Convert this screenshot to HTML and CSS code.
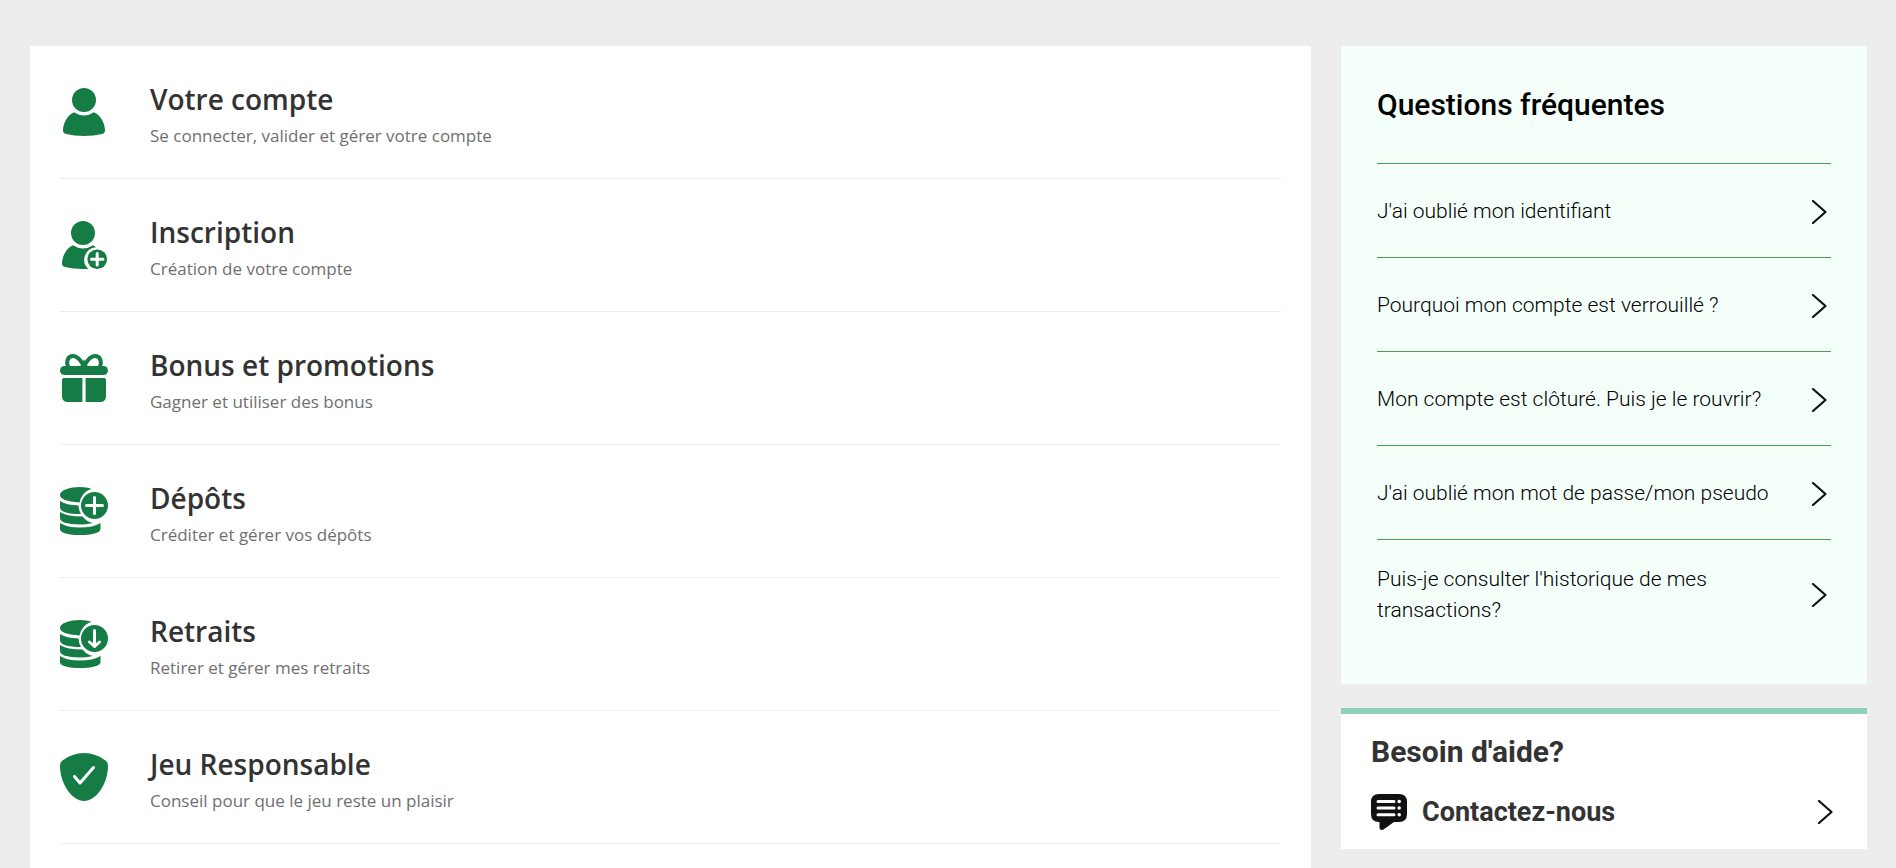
FILE: index.html
```html
<!DOCTYPE html>
<html lang="fr">
<head>
    <meta charset="UTF-8">
    <meta name="viewport" content="width=device-width, initial-scale=1.0">
    <title>Aide</title>
    <link rel="stylesheet" href="styles.css">
</head>
<body>
    <div class="page">
        <main class="topics">
            <a class="topic" href="#compte">
                <svg class="topic-icon" viewBox="0 0 48 48" aria-hidden="true">
                    <circle cx="24" cy="12" r="12"/>
                    <path d="M14 24.200Q24 30.800 34 24.200C40 26.500 45 35 45 42.500Q45 45 42 46Q34 48 24 48T6 46Q3 45 3 42.500C3 35 8 26.500 14 24.200Z"/>
                </svg>
                <div>
                    <h2>Votre compte</h2>
                    <p>Se connecter, valider et gérer votre compte</p>
                </div>
            </a>
            <a class="topic" href="#inscription">
                <svg class="topic-icon" viewBox="0 0 48 48" aria-hidden="true">
                    <circle cx="23" cy="12" r="12"/>
                    <path d="M13 24.200Q23 30.800 33 24.200Q35 25 36 26.200A12.500 12.500 0 0 0 28.500 48H23Q13 48 5 46Q2 45 2 42.500C2 35 7 26.500 13 24.200Z"/>
                    <circle cx="37.200" cy="38.200" r="9.800"/>
                    <path class="line" d="M37.200 32.500v11.400M31.500 38.200h11.400"/>
                </svg>
                <div>
                    <h2>Inscription</h2>
                    <p>Création de votre compte</p>
                </div>
            </a>
            <a class="topic" href="#bonus">
                <svg class="topic-icon" viewBox="0 0 48 48" aria-hidden="true">
                    <path class="ribbon" d="M9 14C5 8 8 2 13 2C19 2 22 9 24 12C26 9 29 2 35 2C40 2 43 8 39 14M20 14Q23 13 24 10.500Q25 13 28 14"/>
                    <rect x="0" y="12" width="48" height="9" rx="4.500"/>
                    <path d="M4 24H22.400V48H8Q2 48 2 42V26Q2 24 4 24ZM25.600 24H44Q46 24 46 26V42Q46 48 40 48H25.600Z"/>
                </svg>
                <div>
                    <h2>Bonus et promotions</h2>
                    <p>Gagner et utiliser des bonus</p>
                </div>
            </a>
            <a class="topic" href="#depots">
                <svg class="topic-icon" viewBox="0 0 48 48" aria-hidden="true">
                    <path d="M0 8C0 3 10 0 20 0Q27 0 31.500 1.800Q22 5 19.500 15.500Q0 14 0 8Z"/>
                    <path d="M0 14Q6 18 18.600 18.500Q18.600 23 21 27Q0 27 0 20Z"/>
                    <path d="M0 25Q7 29.500 22.500 29.500Q27 35 33 36Q26 37.500 20 37.500Q0 37 0 31Z"/>
                    <path d="M0 36Q7 40.500 20 40.500T40.500 36V42C40.500 46 31 48 20 48S0 46 0 42Z"/>
                    <circle cx="34.500" cy="18.500" r="13.500"/>
                    <path class="line" d="M34.500 10.500v16M26.500 18.500h16"/>
                </svg>
                <div>
                    <h2>Dépôts</h2>
                    <p>Créditer et gérer vos dépôts</p>
                </div>
            </a>
            <a class="topic" href="#retraits">
                <svg class="topic-icon" viewBox="0 0 48 48" aria-hidden="true">
                    <path d="M0 8C0 3 10 0 20 0Q27 0 31.500 1.800Q22 5 19.500 15.500Q0 14 0 8Z"/>
                    <path d="M0 14Q6 18 18.600 18.500Q18.600 23 21 27Q0 27 0 20Z"/>
                    <path d="M0 25Q7 29.500 22.500 29.500Q27 35 33 36Q26 37.500 20 37.500Q0 37 0 31Z"/>
                    <path d="M0 36Q7 40.500 20 40.500T40.500 36V42C40.500 46 31 48 20 48S0 46 0 42Z"/>
                    <circle cx="34.500" cy="18.500" r="13.500"/>
                    <path class="line" d="M34.500 10.500v16M29.500 22l5 4.500l5-4.500"/>
                </svg>
                <div>
                    <h2>Retraits</h2>
                    <p>Retirer et gérer mes retraits</p>
                </div>
            </a>
            <a class="topic" href="#jeu-responsable">
                <svg class="topic-icon" viewBox="0 0 48 48" aria-hidden="true">
                    <path d="M24 0Q36 0 45.500 7.500Q48 9.500 48 12.500C48 31 36 48 24 48S0 31 0 12.500Q0 9.500 2.500 7.500Q12 0 24 0Z"/>
                    <path class="line" d="M14.500 23.500l5.500 6.500L33.500 14.500"/>
                </svg>
                <div>
                    <h2>Jeu Responsable</h2>
                    <p>Conseil pour que le jeu reste un plaisir</p>
                </div>
            </a>
        </main>

        <aside class="sidebar">
            <section class="faq">
                <h2>Questions fréquentes</h2>
                <a class="question" href="#q1">
                    <span>J'ai oublié mon identifiant</span>
                    <svg class="chevron" viewBox="0 0 24 24" aria-hidden="true"><path d="M6 1l12.500 11L6 23"/></svg>
                </a>
                <a class="question" href="#q2">
                    <span>Pourquoi mon compte est verrouillé ?</span>
                    <svg class="chevron" viewBox="0 0 24 24" aria-hidden="true"><path d="M6 1l12.500 11L6 23"/></svg>
                </a>
                <a class="question" href="#q3">
                    <span>Mon compte est clôturé. Puis je le rouvrir?</span>
                    <svg class="chevron" viewBox="0 0 24 24" aria-hidden="true"><path d="M6 1l12.500 11L6 23"/></svg>
                </a>
                <a class="question" href="#q4">
                    <span>J'ai oublié mon mot de passe/mon pseudo</span>
                    <svg class="chevron" viewBox="0 0 24 24" aria-hidden="true"><path d="M6 1l12.500 11L6 23"/></svg>
                </a>
                <a class="question" href="#q5">
                    <span>Puis-je consulter l'historique de mes transactions?</span>
                    <svg class="chevron" viewBox="0 0 24 24" aria-hidden="true"><path d="M6 1l12.500 11L6 23"/></svg>
                </a>
            </section>

            <section class="help">
                <h2>Besoin d'aide?</h2>
                <a class="contact" href="#contact">
                    <svg class="chat-icon" viewBox="0 0 36 36" aria-hidden="true">
                        <path d="M8 0H28Q36 0 36 8V20Q36 28 28 28H23L12.500 35.500Q8.500 37 8.500 33V28H8Q0 28 0 20V8Q0 0 8 0Z"/>
                        <path class="line" d="M7 7.500H23M7 14H23M7 20.800H23"/>
                        <g fill="white">
                            <circle cx="28.200" cy="7.500" r="1.800"/>
                            <circle cx="28.200" cy="14" r="1.800"/>
                            <circle cx="28.200" cy="20.800" r="1.800"/>
                        </g>
                    </svg>
                    <span>Contactez-nous</span>
                    <svg class="chevron" viewBox="0 0 24 24" aria-hidden="true"><path d="M6 1l12.500 11L6 23"/></svg>
                </a>
            </section>
        </aside>
    </div>
</body>
</html>
```
FILE: styles.css
```css
* {
    box-sizing: border-box;
}

body {
    margin: 0;
    background-color: #ededed;
    font-family: Roboto, Arial, sans-serif;
    height: 100vh;
    overflow: hidden;
}

h2, p {
    margin: 0;
}

a {
    color: inherit;
    text-decoration: none;
}

.page {
    display: grid;
    grid-template-columns: 1281fr 526fr;
    gap: 30px;
    padding: 46px 29px 0 30px;
    min-height: 100vh;
}

/* liste des rubriques */
.topics {
    background: white;
    padding: 0 30px;
    font-family: "Segoe UI", "Open Sans", sans-serif;
}

.topic {
    display: flex;
    align-items: center;
    gap: 42px;
    height: 133px;
    border-bottom: 1px solid #ededed;
}

.topic-icon {
    width: 48px;
    height: 48px;
    fill: #167c45;
    flex: none;
}

.line {
    fill: none;
    stroke: white;
    stroke-width: 3;
    stroke-linecap: round;
    stroke-linejoin: round;
}

.ribbon {
    fill: none;
    stroke: #167c45;
    stroke-width: 4;
}

.topic h2 {
    font-size: 28px;
    font-weight: 600;
    line-height: 47px;
    color: #333;
}

.topic p {
    font-size: 17px;
    line-height: 26px;
    color: #6f6f6f;
}

/* colonne de droite */
.sidebar {
    display: flex;
    flex-direction: column;
    gap: 24px;
}

.faq {
    background: #f4fffa;
    padding: 36px;
}

.faq h2 {
    font-size: 30px;
    font-weight: 500;
    line-height: 45px;
    margin-bottom: 36px;
}

.question {
    display: flex;
    align-items: center;
    justify-content: space-between;
    gap: 24px;
    min-height: 94px;
    padding: 24px 0 22px;
    border-top: 1px solid #4b9e4f;
    font-size: 21px;
    font-weight: 300;
    line-height: 31px;
}

.chevron {
    width: 24px;
    height: 24px;
    flex: none;
    fill: none;
    stroke: #111;
    stroke-width: 2.2;
    stroke-linecap: round;
    stroke-linejoin: round;
}

.help {
    background: white;
    border-top: 6px solid #8ed0b8;
    padding: 15px 30px 17px;
    color: #333;
}

.help h2 {
    font-size: 30px;
    font-weight: 700;
    line-height: 45px;
    margin-bottom: 18px;
}

.contact {
    display: flex;
    align-items: center;
    gap: 15px;
    font-size: 27px;
    font-weight: 700;
    line-height: 40px;
}

.contact .chevron {
    margin-left: auto;
}

.chat-icon {
    width: 36px;
    height: 36px;
    fill: #111;
}
```
